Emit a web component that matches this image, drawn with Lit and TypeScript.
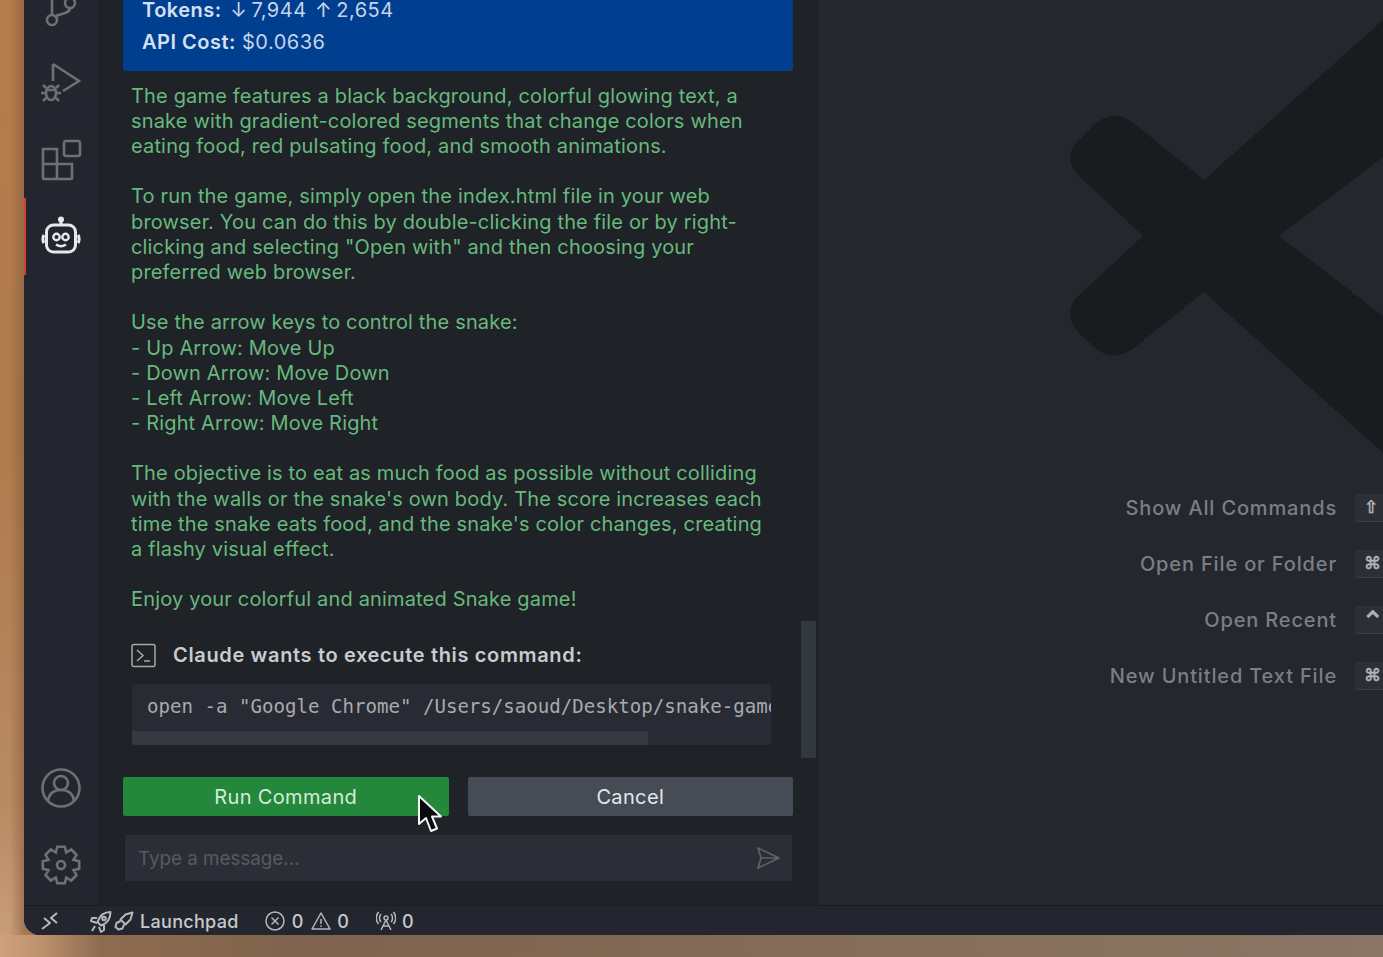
import { LitElement, html, css, svg } from "lit";
import { customElement } from "lit/decorators.js";

const gearPath = () => {
  // 8 tooth gear around 20,20
  const pts: string[] = [];
  const teeth = 8;
  for (let i = 0; i < teeth; i++) {
    const a = (i / teeth) * Math.PI * 2 - Math.PI / 2;
    const step = (Math.PI * 2) / teeth;
    const corners: [number, number][] = [
      [-0.5, 13.5],
      [-0.26, 18.6],
      [0.26, 18.6],
      [0.5, 13.5],
    ];
    for (const [t, r] of corners) {
      const x = 20 + Math.cos(a + t * step) * r;
      const y = 20 + Math.sin(a + t * step) * r;
      pts.push(`${x.toFixed(1)} ${y.toFixed(1)}`);
    }
  }
  return "M" + pts.join("L") + "Z";
};

const gitIcon = svg`<circle cx="11" cy="34" r="5"/><circle cx="29" cy="17" r="5"/><path d="M11 29V0M29 22c0 6-10 5-16 9"/>`;
const debugIcon = svg`<path d="M12 1l26 17-16 10M12 1v17"/><ellipse cx="10" cy="30" rx="5" ry="7"/><path d="M5 25l-3-3M15 25l3-3M4 30H0M16 30h4M5 35l-3 3M15 35l3 3M5 27h10"/>`;
const extIcon = svg`<rect x="23" y="1" width="16" height="15" rx="2"/><path d="M2 9h14v30H3a1 1 0 0 1-1-1zM2 24h29v14a1 1 0 0 1-1 1H16"/>`;
const robotIcon = svg`<circle cx="20" cy="2.500" r="3" fill="currentColor" stroke="none"/><path d="M20 4v4"/><rect x="5.500" y="8" width="29" height="27" rx="7"/><path d="M3 18c-1.500 2-1.500 6 0 8M37 18c1.500 2 1.500 6 0 8"/><g stroke-width="2.400"><circle cx="15.500" cy="20" r="3.200"/><circle cx="24.500" cy="20" r="3.200"/><path d="M15 27.500c3 2 7 2 10 0"/></g>`;
const accountIcon = svg`<circle cx="20" cy="20" r="18.500"/><circle cx="20" cy="15" r="7"/><path d="M7 33c1-8 6-11 13-11s12 3 13 11"/>`;
const gearIcon = svg`<path d=${gearPath()}/><circle cx="20" cy="20" r="4"/>`;

@customElement("app-root")
export class AppRoot extends LitElement {
  static styles = css`
    :host {
      display: block;
      width: 1383px;
      height: 957px;
      overflow: hidden;
      position: relative;
      font-family: Inter, "Liberation Sans", sans-serif;
      background:
        linear-gradient(90deg, rgba(150, 100, 65, 0) 0, rgba(150, 100, 65, 0) 10px, rgba(130, 90, 60, 0.55) 24px),
        linear-gradient(180deg, #b67c4a 0, #b07a4c 450px, #b98a62 800px, #cba07c 957px);
    }

    .bottom-glow {
      position: absolute;
      left: 0;
      right: 0;
      bottom: 0;
      height: 22px;
      background: linear-gradient(90deg, #cfa27c 0, #c09470 35px, #8f6c50 100px, #7f634d 300px, #846c58 800px, #8a7665 1383px);
    }

    .window {
      position: absolute;
      left: 24px;
      top: 0;
      right: 0;
      bottom: 22px;
      display: flex;
      flex-direction: column;
      border-bottom-left-radius: 16px;
      overflow: hidden;
      background: #23262e;
    }

    .main {
      flex: 1;
      min-height: 0;
      display: flex;
    }

    .activity {
      width: 74px;
      flex: none;
      display: flex;
      flex-direction: column;
      justify-content: space-between;
      padding-bottom: 2px;
      box-sizing: border-box;
      background: #23262e;
      overflow: hidden;
      color: #6d7076;
    }

    .activity-group {
      display: flex;
      flex-direction: column;
    }

    .activity-group.top {
      margin-top: -33px;
    }

    .item {
      height: 77px;
      display: flex;
      align-items: center;
      justify-content: center;
      box-sizing: border-box;
      padding-left: 0;
    }

    .item.active {
      color: #e6e8ea;
      box-shadow: inset 2px 0 0 #d6402f;
    }

    .item svg {
      width: 40px;
      height: 40px;
      fill: none;
      stroke: currentColor;
      stroke-width: 2.6;
      overflow: visible;
    }

    .item.active svg {
      stroke-width: 3;
    }

    .sidebar {
      width: 720px;
      flex: none;
      box-sizing: border-box;
      display: flex;
      flex-direction: column;
      justify-content: flex-end;
      overflow: hidden;
      position: relative;
      padding: 0 24px 24px 25px;
      background: #1f2226;
      border-right: 1px solid #1b1d20;
    }

    .banner {
      flex: none;
      background: #003f8f;
      border-radius: 0 0 3px 3px;
      padding: 0 19px 13px;
      color: #c6d4ea;
      font-size: 20px;
      line-height: 32px;
      letter-spacing: 0.5px;
    }

    .banner b {
      font-weight: 600;
      color: #d5e0f0;
    }

    .arrow {
      margin: 0 4px 0 8.5px;
    }

    .message {
      flex: none;
      margin: 12.4px 0 0;
      padding: 0 8px;
      color: #67b97e;
      font-size: 20px;
      line-height: 25.17px;
      letter-spacing: 0.165px;
      white-space: pre;
    }

    .tool-head {
      flex: none;
      margin: 30.6px 0 0 8px;
      display: flex;
      align-items: center;
      gap: 17px;
      height: 24px;
      color: #c9cbce;
      font-size: 20px;
      font-weight: 600;
      letter-spacing: 0.65px;
    }

    .tool-head svg {
      width: 25px;
      height: 25px;
      fill: none;
      stroke: #a5a8ab;
      stroke-width: 1.5;
    }

    .code {
      flex: none;
      margin: 17px 22px 0 9px;
      height: 61px;
      box-sizing: border-box;
      background: #282b33;
      border-radius: 3px;
      overflow: hidden;
      display: flex;
      flex-direction: column;
    }

    .code-text {
      flex: 1;
      padding: 11px 0 0 15px;
      color: #a8aaae;
      font-family: "DejaVu Sans Mono", monospace;
      font-size: 19.1px;
      line-height: 24px;
      white-space: pre;
      overflow: hidden;
    }

    .code-thumb {
      width: 516px;
      height: 14px;
      background: #353941;
    }

    .buttons {
      flex: none;
      margin-top: 32px;
      display: grid;
      grid-template-columns: 1fr 1fr;
      gap: 19px;
    }

    .btn {
      height: 39px;
      display: flex;
      align-items: center;
      justify-content: center;
      border-radius: 2px;
      font-size: 20px;
      letter-spacing: 0.35px;
      color: #e4e6e8;
      background: #464c56;
    }

    .btn.primary {
      background: #24883c;
      color: #d5ecd9;
    }

    .input {
      flex: none;
      margin: 19px 1px 0 2px;
      height: 46px;
      box-sizing: border-box;
      padding: 0 11px 0 13px;
      display: flex;
      align-items: center;
      justify-content: space-between;
      background: #2b2e36;
      color: #575a60;
      font-size: 18.8px;
    }

    .input svg {
      width: 26px;
      height: 26px;
      fill: none;
      stroke: #5f6269;
      stroke-width: 1.7;
      stroke-linejoin: round;
    }

    .thumb {
      position: absolute;
      right: 1px;
      top: 621px;
      width: 15px;
      height: 137px;
      background: #33373e;
    }

    .editor {
      flex: 1;
      min-width: 0;
      position: relative;
      overflow: hidden;
      background: #24272e;
      display: flex;
      flex-direction: column;
      align-items: flex-end;
      padding-top: 494px;
      box-sizing: border-box;
    }

    .watermark {
      position: absolute;
      left: 0;
      top: 0;
      width: 565px;
      height: 905px;
      fill: #191b1e;
    }

    .shortcut {
      position: relative;
      display: flex;
      align-items: center;
      gap: 18px;
      height: 28px;
      margin-bottom: 28px;
      margin-right: -32px;
      color: #7b7e85;
      font-size: 20px;
      font-weight: 500;
      letter-spacing: 0.85px;
    }

    .key {
      width: 60px;
      height: 28px;
      box-sizing: border-box;
      padding-left: 9px;
      background: #2c2f36;
      border-bottom: 1px solid #3a3d44;
      border-radius: 3px;
      color: #b0b3b8;
      font-family: "DejaVu Sans", sans-serif;
      font-size: 17px;
      -webkit-text-stroke: 0.6px #b0b3b8;
      line-height: 26px;
      letter-spacing: 0;
    }

    .key.caret {
      font-size: 28px;
      line-height: 32px;
      padding-left: 6px;
    }

    .status {
      flex: none;
      height: 30px;
      box-sizing: border-box;
      display: flex;
      align-items: center;
      background: #23262e;
      border-top: 1px solid #1b1d20;
      color: #c7c9cd;
      font-size: 18px;
      font-weight: 500;
      padding: 1px 0 0 16px;
    }

    .status svg {
      fill: none;
      stroke: #b6b8bc;
      stroke-width: 1.5;
      stroke-linejoin: round;
    }

    .status-item {
      display: flex;
      align-items: center;
    }

    .launchpad {
      margin-left: 6px;
      letter-spacing: 0.3px;
    }

    .cursor {
      position: absolute;
      left: 417px;
      top: 794px;
      width: 28px;
      height: 42px;
    }
  `;

  private icon(content: unknown, active = false) {
    return html`<div class="item ${active ? "active" : ""}">
      <svg viewBox="0 0 40 40">${content}</svg>
    </div>`;
  }

  render() {
    return html`
      <div class="bottom-glow"></div>
      <div class="window">
        <div class="main">
          <div class="activity">
            <div class="activity-group top">
              ${this.icon(gitIcon)} ${this.icon(debugIcon)} ${this.icon(extIcon)}
              ${this.icon(robotIcon, true)}
            </div>
            <div class="activity-group">${this.icon(accountIcon)} ${this.icon(gearIcon)}</div>
          </div>

          <div class="sidebar">
            <div class="banner">
              <div><b>Tokens:</b><span class="arrow">↓</span>7,944<span class="arrow">↑</span>2,654</div>
              <div><b>API Cost:</b> $0.0636</div>
            </div>
            <div class="message">The game features a black background, colorful glowing text, a
snake with gradient-colored segments that change colors when
eating food, red pulsating food, and smooth animations.

To run the game, simply open the index.html file in your web
browser. You can do this by double-clicking the file or by right-
clicking and selecting "Open with" and then choosing your
preferred web browser.

Use the arrow keys to control the snake:
- Up Arrow: Move Up
- Down Arrow: Move Down
- Left Arrow: Move Left
- Right Arrow: Move Right

The objective is to eat as much food as possible without colliding
with the walls or the snake's own body. The score increases each
time the snake eats food, and the snake's color changes, creating
a flashy visual effect.

Enjoy your colorful and animated Snake game!</div>
            <div class="tool-head">
              <svg viewBox="0 0 25 25">
                <rect x="1" y="1.500" width="23" height="22" rx="2" />
                <path d="M6 7l6 5.500-6 5.500M13 18h6" />
              </svg>
              <span>Claude wants to execute this command:</span>
            </div>
            <div class="code">
              <div class="code-text">open -a "Google Chrome" /Users/saoud/Desktop/snake-game/index.html</div>
              <div class="code-thumb"></div>
            </div>
            <div class="buttons">
              <div class="btn primary">Run Command</div>
              <div class="btn">Cancel</div>
            </div>
            <div class="input">
              <span>Type a message...</span>
              <svg viewBox="0 0 26 26"><path d="M3 3l21 10L3 23l3-10zM6 13h18" /></svg>
            </div>
            <div class="thumb"></div>
          </div>

          <div class="editor">
            <svg class="watermark" viewBox="818 0 565 905">
              <path
                d="M1204 180L1383 20V157L1279 236L1383 316V453L1204 292L1135 347Q1113 364 1094 347L1078 332Q1062 313 1078 296L1143 236L1078 175Q1062 158 1078 141L1094 125Q1113 108 1132 122Z"
              />
            </svg>
            ${[
              ["Show All Commands", "⇧"],
              ["Open File or Folder", "⌘"],
              ["Open Recent", "⌃"],
              ["New Untitled Text File", "⌘"],
            ].map(
              ([label, key]) => html`<div class="shortcut">
                <span>${label}</span><span class="key ${key === "⌃" ? "caret" : ""}">${key}</span>
              </div>`
            )}
          </div>
        </div>

        <div class="status">
          <svg width="20" height="20" viewBox="0 0 20 20" style="margin-right:30px;stroke-width:2">
            <path d="M2 18l8-6-6-5M17 2l-6 5 6 5" />
          </svg>
          <div class="status-item">
            <svg width="22" height="23" viewBox="0 0 22 23" style="stroke-width:2">
              <path d="M20.500 2c-7 0-11 4-13 10l3.500 3.500c6-2 9.500-6.500 9.500-13.500zM7 8H2L1 11l6 2M14 15v5l-3 2-2-5M5 16l-3 5" />
              <circle cx="14" cy="8.500" r="1.800" />
            </svg>
            <svg width="20" height="20" viewBox="0 0 20 20" style="margin-left:2px;stroke-width:2">
              <path d="M18.500 1.500l-7 2-5 5 5 5 5-5zM6.500 10L2.500 12l-1 4 3 2.500 4-1 1.500-4" />
            </svg>
            <span class="launchpad">Launchpad</span>
          </div>
          <div class="status-item" style="margin-left:26px">
            <svg width="20" height="20" viewBox="0 0 20 20">
              <circle cx="10" cy="10" r="9" /><path d="M6.500 6.500l7 7M13.500 6.500l-7 7" />
            </svg>
            <span style="margin-left:7px">0</span>
            <svg width="20" height="20" viewBox="0 0 20 20" style="margin-left:8px">
              <path d="M10 2l9 16H1zM10 8v5M10 14.500v1.500" />
            </svg>
            <span style="margin-left:6px">0</span>
          </div>
          <div class="status-item" style="margin-left:27px">
            <svg width="20" height="20" viewBox="0 0 20 20">
              <circle cx="10" cy="7" r="2" />
              <path d="M10 9L5 19M10 9l5 10M7 15h6M5 3C3 5 3 9 5 11M15 3c2 2 2 6 0 8M2.500 1c-3 4-3 8 0 12M17.500 1c3 4 3 8 0 12" />
            </svg>
            <span style="margin-left:6px">0</span>
          </div>
        </div>
      </div>

      <svg class="cursor" viewBox="0 0 28 42">
        <path
          d="M2 2V30L9 24L14 37L20 34.500L15 22.500H24Z"
          fill="#0a0a0a"
          stroke="#f5f5f5"
          stroke-width="2"
          stroke-linejoin="round"
        />
      </svg>
    `;
  }
}
